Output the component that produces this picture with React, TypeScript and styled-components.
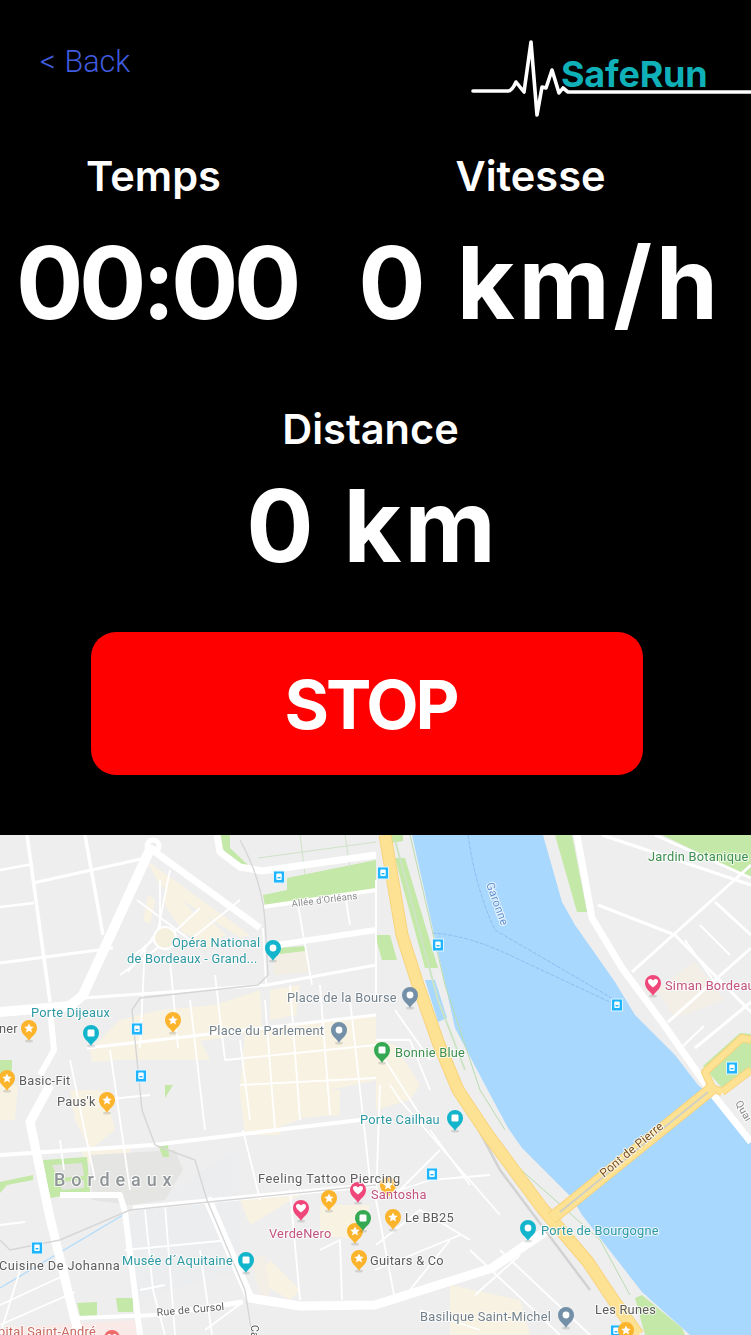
import React from "react";
import styled, { createGlobalStyle } from "styled-components";

const Global = createGlobalStyle`
  html, body { margin: 0; padding: 0; background: #000; }
`;

const Page = styled.main`
  width: 751px;
  height: 1335px;
  overflow: hidden;
  display: flex;
  flex-direction: column;
  background: #000;
  color: #fff;
  font-family: Inter, "Liberation Sans", sans-serif;
`;

const Panel = styled.section`
  height: 835px;
  flex: none;
  display: flex;
  flex-direction: column;
`;

const Header = styled.header`
  height: 120px;
  padding: 40px 0 0 40px;
  box-sizing: border-box;
  display: flex;
  justify-content: space-between;
  align-items: flex-start;
`;

const BackLink = styled.a`
  margin-top: 4px;
  font-family: Roboto, "Liberation Sans", sans-serif;
  font-weight: 300;
  font-size: 30.5px;
  line-height: 36px;
  word-spacing: 1.5px;
  color: #3f5bdf;
`;

const LogoBox = styled.svg`
  display: block;
  width: 280px;
  height: 80px;
`;

const LogoWord = styled.text`
  font-family: Inter, "Liberation Sans", sans-serif;
  font-weight: 700;
  font-size: 36px;
  letter-spacing: -0.2px;
  fill: #0fb0b8;
`;

const Stats = styled.div`
  margin-top: 32px;
  display: grid;
  grid-template-columns: 313px 1fr;
`;

const Stat = styled.div`
  display: flex;
  flex-direction: column;
  align-items: center;
`;

const Label = styled.div<{ $shift?: number }>`
  font-weight: 600;
  font-size: 41.5px;
  line-height: 48px;
  margin-right: ${(p) => p.$shift ?? 0}px;
`;

const Value = styled.div<{ $top: number; $ls: number; $shift?: number }>`
  margin-top: ${(p) => p.$top}px;
  margin-right: ${(p) => p.$shift ?? 0}px;
  font-weight: 700;
  font-size: 100px;
  line-height: 110px;
  letter-spacing: ${(p) => p.$ls}px;
  white-space: pre;
`;

const DistanceBlock = styled.div`
  margin-top: 67px;
  display: flex;
  flex-direction: column;
  align-items: center;
`;

const StopButton = styled.button`
  align-self: flex-start;
  margin: 51px 0 0 91px;
  padding: 0 0 0 7px;
  width: 552px;
  height: 143px;
  border: none;
  border-radius: 25px;
  background: #ff0000;
  color: #fff;
  font-family: Inter, "Liberation Sans", sans-serif;
  font-weight: 700;
  font-size: 68px;
  letter-spacing: -3px;
`;

const MapFrame = styled.svg`
  display: block;
  width: 751px;
  height: 500px;
  flex: none;
  background: #eeeeee;
`;

const Blurred = styled.g`
  filter: blur(0.45px);
`;

const MapLabel = styled.text<{ $c: string; $s?: number; $w?: number; $ls?: number }>`
  font-family: Roboto, "Liberation Sans", sans-serif;
  font-size: ${(p) => p.$s ?? 12.8}px;
  font-weight: ${(p) => p.$w ?? 400};
  letter-spacing: ${(p) => p.$ls ?? 0.25}px;
  fill: ${(p) => p.$c};
  stroke: rgba(255, 255, 255, 0.75);
  stroke-width: 2px;
  paint-order: stroke;
`;

const TEAL = "#2c9aa3";
const GRAY = "#72808c";
const DARK = "#5c5c5c";
const PINK = "#c2527e";
const GREEN = "#3c8f4e";

type L = [string, number, number, string, number?, number?, number?, number?];
// text, x, y, colour, rotation, size, weight, letter spacing
const labels: L[] = [
  ["Opéra National", 172, 947, TEAL],
  ["de Bordeaux -  Grand...", 127, 963, TEAL],
  ["Allée d'Orléans", 292, 907, "#8a8a8a", -7, 9.5],
  ["Place de la Bourse", 287, 1002, GRAY],
  ["Place du Parlement", 209, 1035, GRAY],
  ["Porte Dijeaux", 31, 1017, TEAL],
  ["ner", -1, 1033, DARK],
  ["Basic-Fit", 19, 1085, DARK],
  ["Paus'k", 57, 1106, DARK],
  ["Bordeaux", 54, 1186, "#8f9499", 0, 18, 500, 5.9],
  ["Garonne", 486, 884, "#5f90d2", 70, 11.5],
  ["Jardin Botanique", 648, 861, GREEN],
  ["Siman Bordeaux", 665, 990, PINK],
  ["Bonnie Blue", 395, 1057, GREEN],
  ["Porte Cailhau", 360, 1124, TEAL],
  ["Feeling Tattoo Piercing", 258, 1183, DARK, 0, 12.8, 400, 0.55],
  ["Santosha", 371, 1199, PINK],
  ["Le BB25", 405, 1222, DARK],
  ["VerdeNero", 269, 1238, PINK],
  ["Guitars & Co", 370, 1265, DARK],
  ["Cuisine De Johanna", -1, 1270, DARK, 0, 12.8, 400, 0.45],
  ["Musée d´Aquitaine", 122, 1265, TEAL],
  ["Rue de Cursol", 157, 1316, DARK, -5, 10.5],
  ["Pont de Pierre", 604, 1178, "#7a4d1c", -40, 12],
  ["Porte de Bourgogne", 541, 1235, TEAL],
  ["Basilique Saint-Michel", 420, 1321, GRAY],
  ["Les Runes", 595, 1314, DARK],
  ["Quai", 735, 1103, "#8a8a8a", 60, 10.5],
  ["pital Saint-André", -2, 1336, "#c9695f"],
  ["Ca", 251, 1325, DARK, 90, 10.5],
];

type R = [string, number];
const mainRoads: R[] = [
  ["M152 845 L83 995 L70 1006 L0 1012", 10],
  ["M155 852 L260 928", 7],
  ["M217 835 L220 852 L240 867 L262 871 L376 855", 7],
  ["M33 883 L150 857", 3],
  ["M0 870 L33 864", 2.5],
  ["M27 835 L50 1002", 3.5],
  ["M85 835 L103 935", 3.5],
  ["M0 963 L113 948", 3],
  ["M0 907 L34 903", 2.5],
  ["M263 907 L376 890", 4],
  ["M277 945 L376 930", 6],
  ["M83 998 L267 985 L376 965", 3],
  ["M87 1048 L376 1015", 3],
  ["M50 1010 L54 1050 L40 1075", 6],
  ["M50 1085 L30 1122 L50 1218 L77 1328 L80 1335", 9],
  ["M0 1155 L153 1145 L376 1118", 4],
  ["M60 1195 L120 1195 L125 1212 L140 1335", 6],
  ["M133 1208 L376 1185", 5],
  ["M207 1198 L250 1298 L300 1306 L375 1305 L492 1268 L555 1225", 9],
  ["M157 1315 L243 1302", 5],
  ["M77 1318 L157 1315", 4],
  ["M577 835 L592 918 L622 968 L662 1022 L711 1092 L751 1142", 7],
  ["M602 835 L751 885", 3],
  ["M655 835 L751 878", 3],
  ["M632 972 L751 865", 3],
  ["M598 905 L675 935 L751 1012", 3],
  ["M715 902 L751 935", 3],
  ["M668 1022 L751 948", 3],
  ["M695 1048 L751 1002", 3],
  ["M683 1046 L704 1026", 2],
  ["M700 925 L730 955", 2],
  ["M685 940 L720 990", 2],
];

const minorRoads: string[] = [
  "M137 900 L190 940 L240 900",
  "M160 880 L160 930",
  "M128 972 L158 930 L170 870",
  "M160 935 L128 960",
  "M200 908 L155 950 L120 975",
  "M145 945 L140 1048",
  "M170 960 L178 1048",
  "M215 975 L225 1060",
  "M298 905 L312 985",
  "M345 895 L350 925",
  "M263 928 L266 985",
  "M265 1000 L275 1130",
  "M290 985 L300 1120",
  "M320 985 L330 1115",
  "M350 1000 L370 1180",
  "M110 1050 L130 1190",
  "M190 1000 L205 1130",
  "M240 1040 L250 1120",
  "M70 1060 L95 1180",
  "M60 1140 L64 1170",
  "M100 1100 L150 1095",
  "M225 1060 L376 1045",
  "M240 1085 L376 1078",
  "M243 1130 L260 1200",
  "M145 1210 L153 1290 L165 1335",
  "M165 1205 L175 1335",
  "M0 1225 L25 1222",
  "M0 1305 L65 1275",
  "M0 1325 L75 1292",
  "M125 1250 L230 1240",
  "M140 1290 L165 1285",
  "M205 1330 L243 1302",
  "M290 1190 L300 1300",
  "M320 1250 L340 1240 L342 1300",
  "M376 1245 L420 1210 L470 1240",
  "M375 1270 L460 1235",
  "M375 1195 L400 1190 L430 1180 L490 1175",
  "M430 1130 L470 1185",
  "M390 1085 L400 1100 L500 1215",
  "M440 1150 L400 1190",
  "M380 1085 L376 1200 L395 1300",
  "M410 1290 L450 1240",
  "M470 1250 L560 1335",
  "M500 1250 L590 1335",
  "M420 1310 L480 1330",
  "M475 1295 L520 1255",
  "M385 1060 L420 1115",
  "M395 1010 L430 1060",
  "M0 1335 L20 1270",
  "M200 1250 L212 1335",
  "M376 880 L376 1000",
  "M376 1040 L410 1040 L430 1090",
];

const beige: string[] = [
  "M146 860 L250 935 L240 938 L160 885 Z",
  "M165 880 L200 920 L185 935 L165 905 Z",
  "M148 895 L155 900 L150 925 L143 920 Z",
  "M200 910 L226 935 L205 950 L178 925 Z",
  "M270 990 L300 985 L296 1015 L270 1020 Z",
  "M120 1020 L160 1010 L215 1005 L260 990 L262 1030 L210 1040 L90 1050 Z",
  "M90 1050 L200 1040 L210 1060 L120 1060 L92 1062 Z",
  "M245 1030 L376 1015 L376 1080 L330 1090 L325 1110 L285 1125 L248 1130 L240 1090 Z",
  "M240 1095 L290 1090 L280 1135 L245 1135 Z",
  "M300 1090 L340 1090 L340 1115 L300 1118 Z",
  "M376 1040 L395 1045 L420 1085 L410 1100 L376 1110 Z",
  "M70 1090 L105 1090 L115 1130 L90 1150 L75 1120 Z",
  "M80 1150 L130 1145 L132 1180 L100 1180 Z",
  "M0 1085 L18 1085 L15 1120 L0 1120 Z",
  "M240 1200 L300 1195 L250 1225 Z",
  "M320 1205 L370 1205 L360 1240 L320 1235 Z",
  "M450 1285 L520 1300 L530 1335 L450 1335 Z",
  "M470 1320 L500 1310 L520 1335 L470 1335 Z",
  "M270 1260 L300 1290 L290 1300 L255 1280 Z",
];

const parks: string[] = [
  "M287 878 L376 860 L376 890 L265 906 L263 895 L287 890 Z",
  "M220 835 L230 835 L230 848 L250 867 L233 862 L222 848 Z",
  "M280 948 L305 946 L305 951 L280 954 Z",
  "M555 835 L572 835 L587 912 L577 912 Z",
  "M662 835 L751 835 L751 878 Z",
  "M395 858 L405 858 L438 968 L425 968 Z",
  "M375 935 L390 935 L397 960 L382 960 Z",
  "M390 835 L403 835 L403 841 L392 843 Z",
  "M43 1160 L87 1157 L90 1192 L50 1198 Z",
  "M0 1182 L33 1175 L33 1180 L7 1185 L0 1193 Z",
  "M158 1145 L168 1144 L169 1157 L163 1157 Z",
  "M77 1303 L97 1302 L97 1316 L80 1316 Z",
  "M116 1298 L133 1298 L133 1312 L118 1312 Z",
  "M165 1085 L173 1085 L165 1098 Z",
  "M0 1060 L12 1060 L12 1070 L0 1080 Z",
  "M635 1298 L642 1295 L682 1328 L685 1335 L645 1335 Z",
  "M703 1066 L740 1033 L751 1034 L751 1072 L722 1088 Z",
];

type P = [number, number, "star" | "heart" | "dot" | "square", string];
const pins: P[] = [
  [29, 1028, "star", "#fbb42c"],
  [173, 1020, "star", "#fbb42c"],
  [7, 1078, "star", "#fbb42c"],
  [107, 1100, "star", "#fbb42c"],
  [273, 948, "dot", "#12b5cb"],
  [91, 1033, "square", "#12b5cb"],
  [339, 1030, "dot", "#7390a8"],
  [410, 995, "dot", "#7390a8"],
  [653, 983, "heart", "#f0477a"],
  [382, 1050, "square", "#34a853"],
  [455, 1118, "square", "#12b5cb"],
  [301, 1208, "heart", "#f0477a"],
  [358, 1190, "heart", "#f0477a"],
  [329, 1198, "star", "#fbb42c"],
  [388, 1185, "star", "#fbb42c"],
  [393, 1217, "star", "#fbb42c"],
  [355, 1231, "star", "#fbb42c"],
  [359, 1258, "star", "#fbb42c"],
  [626, 1330, "star", "#fbb42c"],
  [363, 1218, "square", "#34a853"],
  [246, 1260, "square", "#12b5cb"],
  [528, 1228, "dot", "#12b5cb"],
  [566, 1315, "dot", "#7390a8"],
  [112, 1338, "heart", "#ef6a6a"],
];

const transit: [number, number][] = [
  [279, 877], [383, 873], [438, 945], [617, 1005], [732, 1068],
  [137, 1029], [141, 1076], [37, 1248], [432, 1174], [616, 1331],
];

const Pin = ({ x, y, kind, color }: { x: number; y: number; kind: P[2]; color: string }) => (
  <g transform={`translate(${x} ${y})`}>
    <ellipse cx="0" cy="13" rx="4" ry="1.6" fill="rgba(0,0,0,0.12)" />
    <path d="M0 13 C-1.5 9 -8 6.5 -8 0 A8 8 0 1 1 8 0 C8 6.5 1.5 9 0 13 Z" fill={color} />
    {kind === "star" && (
      <path d="M0 -4.6 L1.4 -1.4 L4.8 -1.1 L2.2 1.1 L3 4.4 L0 2.7 L-3 4.4 L-2.2 1.1 L-4.8 -1.1 L-1.4 -1.4 Z" fill="#fff" />
    )}
    {kind === "heart" && (
      <path d="M0 4.6 C-3 2 -5 0.4 -5 -1.8 C-5 -4.6 -1.4 -4.8 0 -2.4 C1.4 -4.8 5 -4.6 5 -1.8 C5 0.4 3 2 0 4.6 Z" fill="#fff" />
    )}
    {kind === "dot" && <circle cx="0" cy="0" r="3.4" fill="#fff" />}
    {kind === "square" && <rect x="-3.5" y="-3.5" width="7" height="7" rx="1.2" fill="#fff" />}
  </g>
);

const Transit = ({ x, y }: { x: number; y: number }) => (
  <g transform={`translate(${x - 5.5} ${y - 6})`}>
    <rect width="11" height="12" fill="#1fb6ff" stroke="#dff3ff" strokeWidth="1" />
    <rect x="2.8" y="2.5" width="5.4" height="6.5" rx="1" fill="#fff" />
    <rect x="4" y="6" width="3" height="1.4" fill="#1fb6ff" />
  </g>
);

const HIGHWAY = "M385 835 L402 935 L418 985 L438 1042 L458 1090 L488 1135 L542 1208 L588 1262 L612 1298 L638 1335";
const BRIDGE = "M552 1218 L708 1092 L712 1088";
const JUNCTION = "M722 1092 L712 1088 L705 1072 L742 1038 L751 1040 M722 1092 L751 1070";

const CityMap = () => (
  <MapFrame viewBox="0 835 751 500" role="img" aria-label="Carte de Bordeaux">
    <Blurred>
      {beige.map((d, i) => <path key={i} d={d} fill="#f8f2e2" />)}
      <path d="M657 990 L694 962 L725 1000 L675 1018 Z" fill="#f4efe6" />
      <path d="M272 952 L308 950 L308 972 L274 975 Z" fill="#f3eee4" />
      <path d="M250 1258 L265 1255 L270 1295 L262 1298 Z" fill="#f4efe6" />
      <path d="M0 1328 L135 1320 L137 1335 L0 1335 Z" fill="#f9e9e7" />
      <path d="M238 1150 L240 1270 L130 1300 L125 1220 Z" fill="#e9ecef" opacity="0.5" />
      <path d="M90 1155 L175 1150 L183 1170 L165 1200 L130 1205 L92 1200 Z" fill="#e5e5e3" />
      {parks.map((d, i) => <path key={i} d={d} fill="#c4e8a7" />)}
      <path d="M52 1165 L82 1163 L84 1176 L58 1178 Z M60 1182 L84 1180 L84 1188 L62 1190 Z" fill="#e3e3e0" />

      {/* River */}
      <path
        d="M412 835 L438 952 L455 1028 L485 1085 L508 1128 L522 1148 L572 1198 L582 1215 L642 1292 L690 1335 L751 1335 L751 1142 L718 1102 L698 1085 L675 1055 L635 1015 L615 982 L575 925 L562 902 L543 835 Z"
        fill="#a9d8fe"
      />
      <path d="M425 980 L435 980 L447 1018 L438 1022 Z" fill="#a9d8fe" />

      {/* Thin ferry and pontoon lines */}
      <path d="M468 835 Q476 890 495 930 L615 1000" fill="none" stroke="#8dbcf0" strokeWidth="1" strokeDasharray="4 1.5" />
      <path d="M432 933 Q470 935 520 960 L612 1003" fill="none" stroke="#8dbcf0" strokeWidth="1" strokeDasharray="4 1.5" />
      <path d="M0 1288 L123 1215" fill="none" stroke="#b4dcfa" strokeWidth="1.4" />
      <path d="M410 835 L445 985 L480 1090 L505 1130" fill="none" stroke="#b8dcb0" strokeWidth="1" />
      <path d="M395 840 L438 1000 L465 1070" fill="none" stroke="#cde4c4" strokeWidth="2" />
      <path d="M510 1160 L600 1240 L630 1295" fill="none" stroke="#b8dcb0" strokeWidth="1" />
      <path d="M258 858 L376 842 M300 835 L305 875 M345 835 L350 868" fill="none" stroke="#cfe3c8" strokeWidth="1" />

      {/* Roads */}
      {minorRoads.map((d, i) => (
        <path key={i} d={d} fill="none" stroke="#fff" strokeWidth="1.8" strokeLinejoin="round" />
      ))}
      {mainRoads.map(([d, w], i) => (
        <path key={i} d={d} fill="none" stroke="#fff" strokeWidth={w} strokeLinejoin="round" />
      ))}
      <circle cx="153" cy="846" r="6" fill="none" stroke="#fff" strokeWidth="5" />
      <circle cx="165" cy="938" r="11" fill="#f5efdd" stroke="#fff" strokeWidth="2" />

      {/* Tram line */}
      <path d="M240 840 Q262 880 265 920 L268 975 L258 985 L140 998 L132 1010 L142 1110 L155 1145 L195 1160 L207 1200 L245 1290 L252 1335"
        fill="none" stroke="#d6d6d6" strokeWidth="1.4" />
      <path d="M0 1240 L10 1250 L60 1240 L130 1210 L376 1185" fill="none" stroke="#d6d6d6" strokeWidth="1.4" />
      <path d="M455 1085 L500 1170 L590 1290" fill="none" stroke="#d2d2d2" strokeWidth="2.5" />

      {/* Highway */}
      <path d={HIGHWAY} fill="none" stroke="#f8d37c" strokeWidth="13" strokeLinejoin="round" />
      <path d={HIGHWAY} fill="none" stroke="#fde293" strokeWidth="11" strokeLinejoin="round" />
      {/* Bridge and its junction */}
      <path d={JUNCTION} fill="none" stroke="#f8d37c" strokeWidth="8" strokeLinejoin="round" />
      <path d={JUNCTION} fill="none" stroke="#fde293" strokeWidth="6" strokeLinejoin="round" />
      <path d={BRIDGE} fill="none" stroke="#f8d37c" strokeWidth="13" />
      <path d={BRIDGE} fill="none" stroke="#fde293" strokeWidth="11" />
      <path d="M560 1212 L708 1092" fill="none" stroke="#cfcfc6" strokeWidth="1.8" />
    </Blurred>

    <Blurred>
      {transit.map(([x, y], i) => <Transit key={i} x={x} y={y} />)}
      {pins.map(([x, y, k, c], i) => <Pin key={i} x={x} y={y} kind={k} color={c} />)}
      {labels.map(([t, x, y, c, r, s, w, ls], i) => (
        <MapLabel
          key={i}
          x={x}
          y={y}
          $c={c}
          $s={s}
          $w={w}
          $ls={ls}
          transform={r ? `rotate(${r} ${x} ${y})` : undefined}
        >
          {t}
        </MapLabel>
      ))}
    </Blurred>
  </MapFrame>
);

const Logo = () => (
  <LogoBox viewBox="471 40 280 80">
    <path
      d="M473 91 L508 91 Q512 91 516 82 L524 92 L531 42 L537 115 L542 87 L546 88 L552 70 L559 93 L563 88 L568 92 L751 92"
      fill="none"
      stroke="#fff"
      strokeWidth="3.6"
      strokeLinejoin="round"
      strokeLinecap="round"
    />
    <LogoWord x="561" y="87">SafeRun</LogoWord>
  </LogoBox>
);

export default function App() {
  return (
    <Page>
      <Global />
      <Panel>
        <Header>
          <BackLink>&lt; Back</BackLink>
          <Logo />
        </Header>
        <Stats>
          <Stat>
            <Label $shift={6}>Temps</Label>
            <Value $top={28} $ls={-4.4}>00:00</Value>
          </Stat>
          <Stat>
            <Label $shift={3}>Vitesse</Label>
            <Value $top={28} $ls={3.7} $shift={-16}>0 km/h</Value>
          </Stat>
        </Stats>
        <DistanceBlock>
          <Label $shift={10}>Distance</Label>
          <Value $top={18} $ls={3} $shift={6}>0 km</Value>
        </DistanceBlock>
        <StopButton>STOP</StopButton>
      </Panel>
      <CityMap />
    </Page>
  );
}
